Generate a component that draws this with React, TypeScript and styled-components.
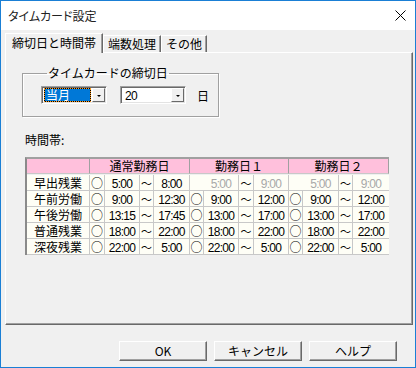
import React from "react";
import styled, { createGlobalStyle } from "styled-components";

const GlobalStyle = createGlobalStyle`
  html, body {
    margin: 0;
    padding: 0;
    background: #fff;
  }
  body {
    font-family: "Noto Sans CJK JP", sans-serif;
    font-size: 12px;
    color: #000;
  }
`;

const Window = styled.div`
  width: 416px;
  height: 368px;
  box-sizing: border-box;
  border: 1px solid #1a7fd5;
  display: flex;
  flex-direction: column;
  background: #f0f0f0;
`;

const TitleBar = styled.div`
  height: 29px;
  flex: none;
  background: #fff;
  display: flex;
  align-items: center;
  justify-content: space-between;
  padding: 0 9px 0 7px;
`;

const Title = styled.span`
  font-size: 12px;
  font-feature-settings: "palt";
  color: #222;
`;

const Body = styled.div`
  flex: 1;
  display: flex;
  flex-direction: column;
  padding: 3px 2px 0 4px;
`;

const TabStrip = styled.div`
  display: flex;
  align-items: flex-end;
  height: 19px;
  position: relative;
  z-index: 1;
`;

// raised tab, the active one overlaps the panel's top edge
const Tab = styled.div<{ $active?: boolean }>`
  box-sizing: border-box;
  height: ${(p) => (p.$active ? 20 : 17)}px;
  margin-bottom: ${(p) => (p.$active ? -1 : 0)}px;
  padding: ${(p) => (p.$active ? "1px 6px 0 6px" : "0 4px 0 4px")};
  border-top: 1px solid #fff;
  border-left: 1px solid #fff;
  border-right: 1px solid #696969;
  box-shadow: inset -1px 0 #a0a0a0;
  background: #f0f0f0;
  line-height: 16px;
  font-size: 12px;
  white-space: nowrap;
`;

const Panel = styled.div`
  box-sizing: border-box;
  width: 408px;
  height: 273px;
  flex: none;
  border-top: 1px solid #fff;
  border-left: 1px solid #fff;
  border-right: 1px solid #696969;
  border-bottom: 1px solid #696969;
  box-shadow: inset -1px -1px #a0a0a0;
  padding: 13px 0 0 16px;
  overflow: hidden;
`;

const GroupBox = styled.fieldset`
  box-sizing: border-box;
  width: 197px;
  height: 51px;
  margin: 0;
  padding: 0 0 0 18px;
  border: 1px solid #a0a0a0;
  box-shadow: 1px 1px #fff, inset 1px 1px #fff;
`;

const Legend = styled.legend`
  margin-left: 6px;
  padding: 0 1px;
  line-height: 14px;
  font-size: 12px;
`;

const ComboRow = styled.div`
  display: flex;
  align-items: center;
  margin-top: 6px;
`;

const Combo = styled.div`
  box-sizing: border-box;
  width: 66px;
  height: 18px;
  display: flex;
  align-items: stretch;
  background: #fff;
  border: 1px solid;
  border-color: #a0a0a0 #fff #fff #a0a0a0;
  box-shadow: inset 1px 1px #696969, inset -1px -1px #e3e3e3;
  padding: 1px 1px 1px 2px;
`;

const ComboValue = styled.div<{ $focused?: boolean }>`
  flex: 1;
  box-sizing: border-box;
  font-size: 12px;
  line-height: 12px;
  padding: 0 1px;
  margin-right: 1px;
  white-space: nowrap;
  ${(p) =>
    p.$focused
      ? `
    color: #fff;
    border: 1px dotted #ff9a1a;
    background: linear-gradient(#0078d7, #0078d7) padding-box, #000 border-box;
  `
      : `
    border: 1px solid transparent;
  `}
`;

const DropButton = styled.div`
  box-sizing: border-box;
  width: 13px;
  background: #f0f0f0;
  border-top: 1px solid #fff;
  border-left: 1px solid #fff;
  border-right: 1px solid #696969;
  border-bottom: 1px solid #696969;
  display: flex;
  align-items: center;
  justify-content: center;
`;

const Arrow = styled.span`
  width: 0;
  height: 0;
  border-left: 2px solid transparent;
  border-right: 2px solid transparent;
  border-top: 2px solid #000;
  margin-top: 2px;
`;

const DayLabel = styled.span`
  margin-left: 11px;
  font-size: 12px;
`;

const SectionLabel = styled.div`
  margin: 16px 0 0 3px;
  line-height: 14px;
  font-size: 12px;
`;

const Grid = styled.div`
  margin: 10px 0 0 3px;
  display: grid;
  grid-template-columns: 63px 15px 35px 14px 36px 14px 35px 15px 35px 14px 36px 14px 36px;
  grid-auto-rows: 16px;
  width: 362px;
  border-top: 2px solid #a0a0a0;
  border-left: 2px solid #8a8a8a;
`;

const HeadCell = styled.div<{ $span: number }>`
  grid-column: span ${(p) => p.$span};
  box-sizing: border-box;
  height: 15px;
  background: #ffc0dc;
  border-right: 1px solid #a0a0a0;
  border-bottom: 1px solid #c8c8c8;
  text-align: center;
  line-height: 14px;
  font-size: 12px;
  &:last-child {
    border-right: none;
  }
`;

const Cell = styled.div<{
  $muted?: boolean;
  $noLine?: boolean;
  $last?: boolean;
}>`
  box-sizing: border-box;
  background: #fefef6;
  border-right: ${(p) => (p.$noLine || p.$last ? "none" : "1px solid #c8c8c8")};
  border-bottom: 1px solid #c8c8c8;
  text-align: center;
  line-height: 15px;
  font-size: 12px;
  color: ${(p) => (p.$muted ? "#a8a8a8" : "#000")};
  white-space: nowrap;
  overflow: hidden;
`;

const TimeText = styled.span`
  font-family: "Liberation Sans", sans-serif;
  font-size: 12px;
  letter-spacing: -0.7px;
`;

const Mark = styled.span`
  font-size: 12px;
`;

const Wave = styled.span`
  font-size: 11px;
`;

const ButtonRow = styled.div`
  display: flex;
  justify-content: flex-end;
  gap: 7px;
  margin: 16px 16px 0 0;
`;

const Button = styled.button`
  box-sizing: border-box;
  width: 88px;
  height: 20px;
  padding: 0;
  background: #f0f0f0;
  border-top: 1px solid #fff;
  border-left: 1px solid #fff;
  border-right: 1px solid #696969;
  border-bottom: 1px solid #696969;
  box-shadow: inset -1px -1px #a0a0a0;
  font-family: "Noto Sans CJK JP", sans-serif;
  font-size: 12px;
  line-height: 16px;
  color: #000;
`;

type Slot = { on: boolean; start: string; end: string };
type Row = { label: string; slots: Slot[] };

const rows: Row[] = [
  {
    label: "早出残業",
    slots: [
      { on: true, start: "5:00", end: "8:00" },
      { on: false, start: "5:00", end: "9:00" },
      { on: false, start: "5:00", end: "9:00" },
    ],
  },
  {
    label: "午前労働",
    slots: [
      { on: true, start: "9:00", end: "12:30" },
      { on: true, start: "9:00", end: "12:00" },
      { on: true, start: "9:00", end: "12:00" },
    ],
  },
  {
    label: "午後労働",
    slots: [
      { on: true, start: "13:15", end: "17:45" },
      { on: true, start: "13:00", end: "17:00" },
      { on: true, start: "13:00", end: "17:00" },
    ],
  },
  {
    label: "普通残業",
    slots: [
      { on: true, start: "18:00", end: "22:00" },
      { on: true, start: "18:00", end: "22:00" },
      { on: true, start: "18:00", end: "22:00" },
    ],
  },
  {
    label: "深夜残業",
    slots: [
      { on: true, start: "22:00", end: "5:00" },
      { on: true, start: "22:00", end: "5:00" },
      { on: true, start: "22:00", end: "5:00" },
    ],
  },
];

const CloseIcon = () => (
  <svg width="11" height="11" viewBox="0 0 11 11">
    <path d="M0.5 0.5 L10.5 10.5 M10.5 0.5 L0.5 10.5" stroke="#000" strokeWidth="1" />
  </svg>
);

export default function App() {
  return (
    <>
      <GlobalStyle />
      <Window>
        <TitleBar>
          <Title>タイムカード設定</Title>
          <CloseIcon />
        </TitleBar>
        <Body>
          <TabStrip>
            <Tab $active>締切日と時間帯</Tab>
            <Tab>端数処理</Tab>
            <Tab>その他</Tab>
          </TabStrip>
          <Panel>
            <GroupBox>
              <Legend>タイムカードの締切日</Legend>
              <ComboRow>
                <Combo>
                  <ComboValue $focused>当月</ComboValue>
                  <DropButton>
                    <Arrow />
                  </DropButton>
                </Combo>
                <Combo style={{ marginLeft: 13 }}>
                  <ComboValue>
                    <TimeText>20</TimeText>
                  </ComboValue>
                  <DropButton>
                    <Arrow />
                  </DropButton>
                </Combo>
                <DayLabel>日</DayLabel>
              </ComboRow>
            </GroupBox>
            <SectionLabel>時間帯:</SectionLabel>
            <Grid>
              <HeadCell $span={1} />
              <HeadCell $span={4}>通常勤務日</HeadCell>
              <HeadCell $span={4}>勤務日１</HeadCell>
              <HeadCell $span={4}>勤務日２</HeadCell>
              {rows.map((row) => (
                <React.Fragment key={row.label}>
                  <Cell>{row.label}</Cell>
                  {row.slots.map((s, i) => (
                    <React.Fragment key={i}>
                      <Cell $noLine={!s.on}>{s.on ? <Mark>○</Mark> : null}</Cell>
                      <Cell $muted={!s.on}>
                        <TimeText>{s.start}</TimeText>
                      </Cell>
                      <Cell>
                        <Wave>～</Wave>
                      </Cell>
                      <Cell $muted={!s.on} $last={i === 2}>
                        <TimeText>{s.end}</TimeText>
                      </Cell>
                    </React.Fragment>
                  ))}
                </React.Fragment>
              ))}
            </Grid>
          </Panel>
          <ButtonRow>
            <Button>OK</Button>
            <Button>キャンセル</Button>
            <Button>ヘルプ</Button>
          </ButtonRow>
        </Body>
      </Window>
    </>
  );
}
